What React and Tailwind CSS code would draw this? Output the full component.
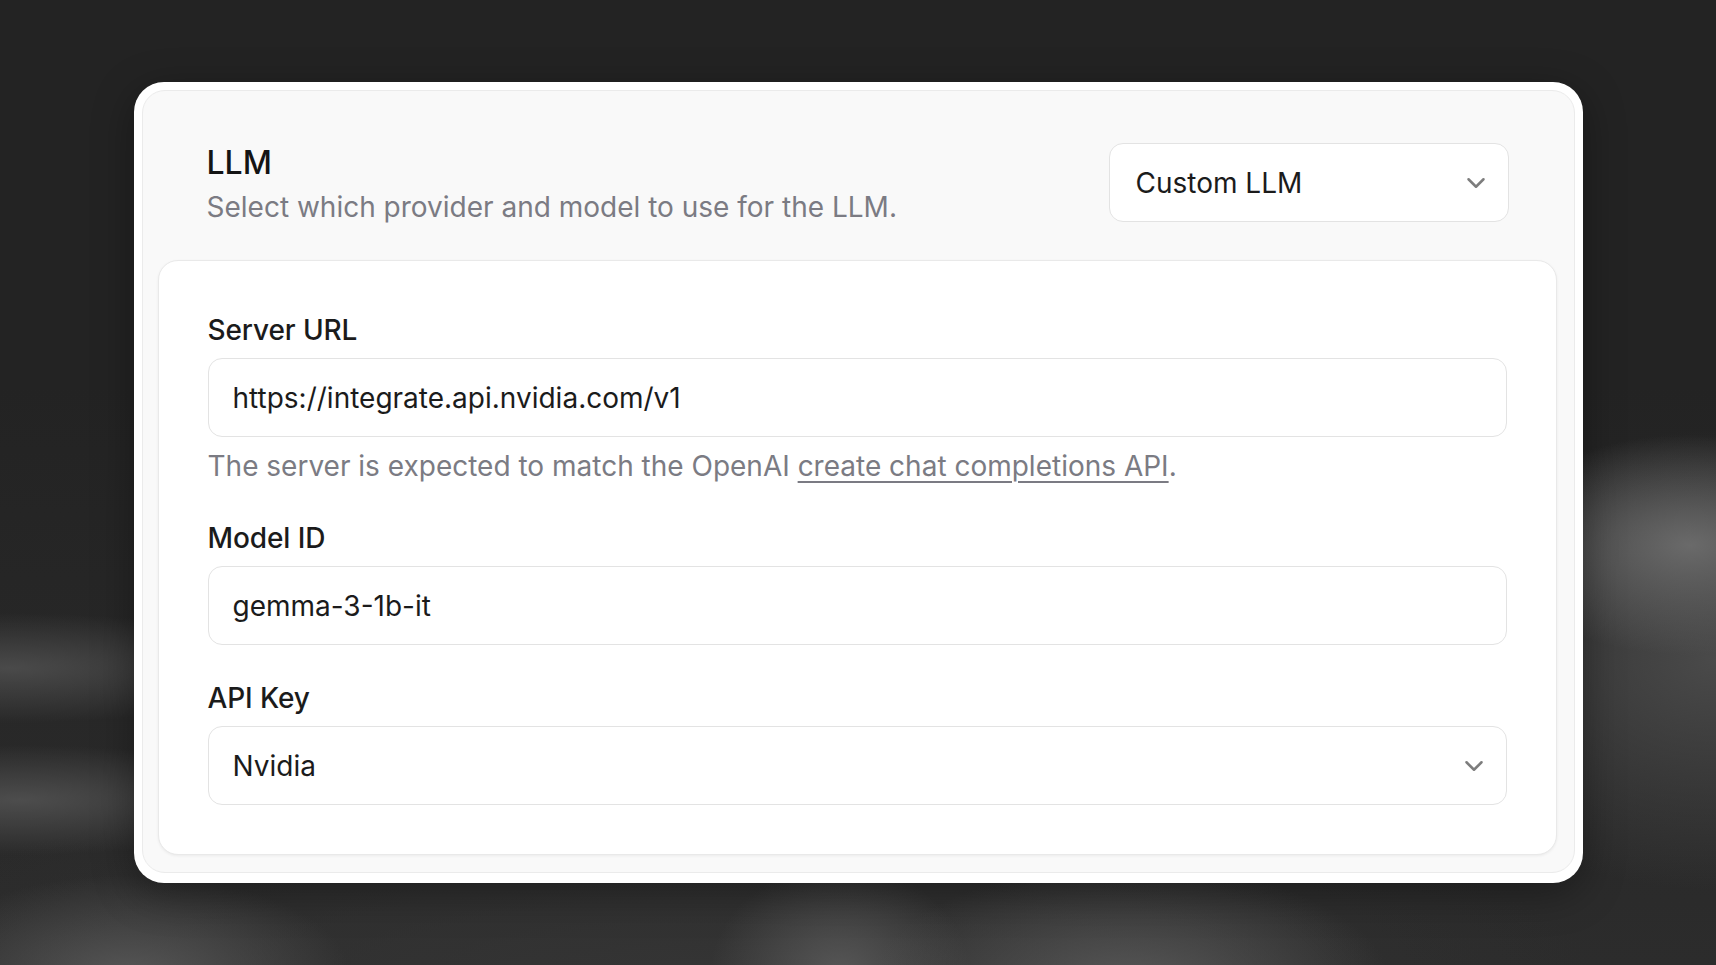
import React from "react";
import { ChevronDown } from "lucide-react";

function Label({ children }) {
  return (
    <div className="text-[28px] leading-[34px] font-medium text-[#1b1b1b] tracking-[-0.1px]">
      {children}
    </div>
  );
}

function TextBox({ value }) {
  return (
    <div className="h-[79px] w-full rounded-[14px] border-[1.5px] border-[#e3e3e3] bg-white pl-[24px] pr-4 flex items-center text-[28px] text-[#1b1b1b]">
      {value}
    </div>
  );
}

function SelectBox({ value, className = "" }) {
  return (
    <div
      className={
        "h-[79px] rounded-[14px] border-[1.5px] border-[#e3e3e3] bg-white pl-[24px] pr-[17px] flex items-center justify-between text-[28px] text-[#1b1b1b] " +
        className
      }
    >
      <span>{value}</span>
      <ChevronDown size={30} strokeWidth={2} className="text-[#7d7d7d]" />
    </div>
  );
}

export default function App() {
  return (
    <div className="min-h-screen w-full flex items-center justify-center bg-[#252525] bg-[radial-gradient(ellipse_200px_110px_at_1690px_545px,#6a6a6a,transparent),radial-gradient(ellipse_320px_230px_at_1716px_660px,#4a4a4a,transparent),radial-gradient(ellipse_260px_120px_at_1130px_985px,#575757,transparent),radial-gradient(ellipse_130px_110px_at_840px_975px,#575757,transparent),radial-gradient(ellipse_280px_55px_at_10px_668px,#4a4a4a,transparent),radial-gradient(ellipse_280px_55px_at_20px_800px,#4d4d4d,transparent),radial-gradient(ellipse_220px_100px_at_130px_975px,#565656,transparent),radial-gradient(ellipse_900px_220px_at_700px_990px,#353535,transparent),linear-gradient(to_bottom,#232323_40%,#2c2c2c)] font-['Inter',sans-serif]">
      <div className="w-[1449px] rounded-[30px] bg-white p-2 pb-[10px] shadow-[0_10px_40px_rgba(0,0,0,0.35)]">
        <div className="rounded-[23px] border border-[#ebebeb] bg-[#f9f9f9] pl-[15px] pr-[17px] pb-[17px] pt-[52px]">
          <div className="flex items-start justify-between pl-[49px] pr-[48px]">
            <div className="pt-[1px]">
              <div className="text-[32px] leading-[38px] font-medium text-[#141414]">LLM</div>
              <div className="mt-2 text-[28px] leading-[34px] text-[#7b7b83]">
                Select which provider and model to use for the LLM.
              </div>
            </div>
            <SelectBox value="Custom LLM" className="w-[400px] pl-[26px]" />
          </div>

          <div className="mt-[36px] rounded-[20px] border border-[#e9e9e9] bg-white px-[49px] pt-[52px] pb-[49px] shadow-[0_1px_3px_rgba(0,0,0,0.06)]">
            <div className="flex flex-col">
              <Label>Server URL</Label>
              <div className="mt-[11px]">
                <TextBox value="https://integrate.api.nvidia.com/v1" />
              </div>
              <div className="mt-[12px] text-[28px] leading-[34px] text-[#7b7b83]">
                The server is expected to match the OpenAI{" "}
                <span className="underline underline-offset-[5px] decoration-[1.5px]">
                  create chat completions API
                </span>
                .
              </div>

              <div className="mt-[38px]">
                <Label>Model ID</Label>
              </div>
              <div className="mt-[11px]">
                <TextBox value="gemma-3-1b-it" />
              </div>

              <div className="mt-[36px]">
                <Label>API Key</Label>
              </div>
              <div className="mt-[11px]">
                <SelectBox value="Nvidia" className="w-full" />
              </div>
            </div>
          </div>
        </div>
      </div>
    </div>
  );
}
